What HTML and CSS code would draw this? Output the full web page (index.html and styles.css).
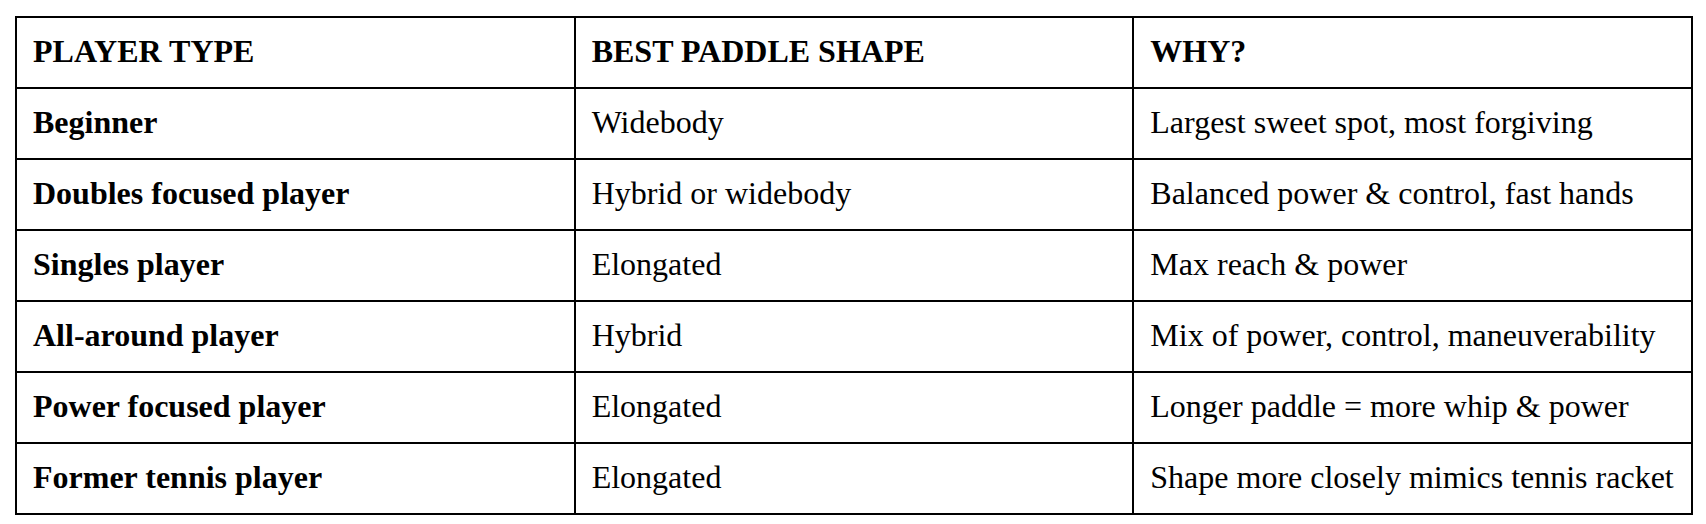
FILE: index.html
```html
<!DOCTYPE html>
<html>
<head>
<meta charset="utf-8">
<link rel="stylesheet" href="styles.css">
</head>
<body>
<table class="guide">
  <colgroup><col class="c"><col class="c"><col class="c"></colgroup>
  <thead>
    <tr><th>PLAYER TYPE</th><th>BEST PADDLE SHAPE</th><th>WHY?</th></tr>
  </thead>
  <tbody>
    <tr><td class="type">Beginner</td><td>Widebody</td><td>Largest sweet spot, most forgiving</td></tr>
    <tr><td class="type">Doubles focused player</td><td>Hybrid or widebody</td><td>Balanced power &amp; control, fast hands</td></tr>
    <tr><td class="type">Singles player</td><td>Elongated</td><td>Max reach &amp; power</td></tr>
    <tr><td class="type">All-around player</td><td>Hybrid</td><td>Mix of power, control, maneuverability</td></tr>
    <tr><td class="type">Power focused player</td><td>Elongated</td><td>Longer paddle = more whip &amp; power</td></tr>
    <tr><td class="type">Former tennis player</td><td>Elongated</td><td>Shape more closely mimics tennis racket</td></tr>
  </tbody>
</table>
</body>
</html>
```

FILE: styles.css
```css
html, body {
  margin: 0;
  padding: 0;
  background: #ffffff;
}
body {
  padding: 16px 0 0 15px;
  font-family: "Liberation Serif", "Times New Roman", serif;
  color: #000;
}
.guide {
  border-collapse: collapse;
  table-layout: fixed;
  width: 1678px;
  font-size: 32px;
}
.guide .c { width: 33.333%; }
.guide th, .guide td {
  border: 2px solid #000;
  height: 71px;
  box-sizing: border-box;
  padding: 0 16px 4px;
  text-align: left;
  vertical-align: middle;
  line-height: 36px;
  white-space: nowrap;
}
.guide th { font-weight: bold; }
.guide td.type { font-weight: bold; }
```
